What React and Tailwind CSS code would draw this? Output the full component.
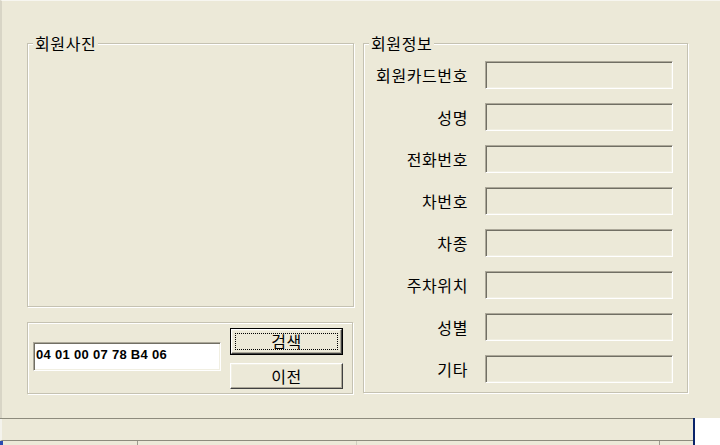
import React from "react";

const KR = { fontFamily: '"Noto Sans CJK KR", "Noto Sans", sans-serif' };

const fields = ["회원카드번호", "성명", "전화번호", "차번호", "차종", "주차위치", "성별", "기타"];

function GroupBox({ label, className = "", children }) {
  return (
    <div
      className={
        "relative border border-[#C5C2B2] shadow-[inset_1px_1px_0_#fff,1px_1px_0_#fff] " +
        className
      }
    >
      {label && (
        <span className="absolute left-[5px] -top-[10px] bg-[#ECE9D8] px-[2px] text-[16px] leading-[18px] tracking-[0.6px] text-black">
          {label}
        </span>
      )}
      {children}
    </div>
  );
}

function SunkenField({ white = false, className = "", children }) {
  return (
    <div
      className={
        "border border-t-[#ACA899] border-l-[#ACA899] border-b-white border-r-white shadow-[inset_1px_1px_0_#716F64,inset_-1px_-1px_0_#F1EFE2] " +
        (white ? "bg-white " : "bg-[#ECE9D8] ") +
        className
      }
    >
      {children}
    </div>
  );
}

function XpButton({ label, isDefault = false, className = "" }) {
  const raised =
    "border border-t-white border-l-white border-b-[#404040] border-r-[#404040] shadow-[inset_-1px_-1px_0_#ACA899,inset_1px_1px_0_#F1EFE2] bg-[#ECE9D8]";
  if (isDefault) {
    return (
      <div className={"border border-black flex " + className}>
        <div className={"flex-1 flex p-[3px] " + raised}>
          <div className="flex-1 flex items-center justify-center border border-dotted border-black text-[16px] leading-none tracking-[0.6px] text-black">
            {label}
          </div>
        </div>
      </div>
    );
  }
  return (
    <div
      className={
        "flex items-center justify-center text-[16px] leading-none tracking-[0.6px] text-black " +
        raised +
        " " +
        className
      }
    >
      {label}
    </div>
  );
}

export default function App() {
  return (
    <div className="w-[720px] h-[445px] overflow-hidden bg-[#ECE9D8] flex flex-col" style={KR}>
      {/* main form area */}
      <div className="h-[418px] flex border-t border-t-[#F7F6F0] border-l-2 border-l-[#D8D5C6] pl-[25px] pt-[42px]">
        {/* left column */}
        <div className="w-[327px] flex flex-col">
          <GroupBox label="회원사진" className="h-[264px]" />
          <GroupBox className="mt-[15px] h-[72px] w-[326px] flex items-center pl-[5px] pr-[8px]">
            <SunkenField white className="w-[188px] h-[29px] mt-[-4px] pl-[2px] pt-[3px] leading-[13px]">
              <span
                className="text-[13px] leading-[13px] font-bold tracking-[0.3px] text-black"
                style={{ fontFamily: '"Liberation Sans", Arial, sans-serif' }}
              >
                04 01 00 07 78 B4 06
              </span>
            </SunkenField>
            <div className="ml-[9px] flex flex-col gap-[8px]">
              <XpButton label="검색" isDefault className="w-[113px] h-[27px]" />
              <XpButton label="이전" className="w-[113px] h-[26px]" />
            </div>
          </GroupBox>
        </div>

        {/* right group */}
        <GroupBox label="회원정보" className="ml-[9px] w-[325px] h-[350px] pt-[17px] flex flex-col gap-[14px]">
          {fields.map((f) => (
            <div key={f} className="flex items-center">
              <div className="w-[104px] text-right text-[16px] leading-[18px] tracking-[0.6px] text-black">
                {f}
              </div>
              <SunkenField className="ml-[17px] w-[188px] h-[28px]" />
            </div>
          ))}
        </GroupBox>
      </div>

      {/* bottom strip */}
      <div className="flex-1 flex">
        <div className="w-[693px] flex flex-col border-t border-[#8D8B7D]">
          <div className="h-[22px] border-b border-[#8D8B7D] border-l-2 border-l-[#F4F3EC]" />
          <div className="flex-1 flex border-l-[3px] border-l-[#2A4BB0]">
            <div className="w-[135px] border-r border-[#9D9B8E]" />
            <div className="w-[219px] border-r border-[#D0CEBF]" />
            <div className="w-[303px] border-r border-[#9D9B8E]" />
            <div className="flex-1" />
          </div>
        </div>
        <div className="w-[2px] bg-[#0A246A]" />
        <div className="flex-1 bg-white" />
      </div>
    </div>
  );
}
